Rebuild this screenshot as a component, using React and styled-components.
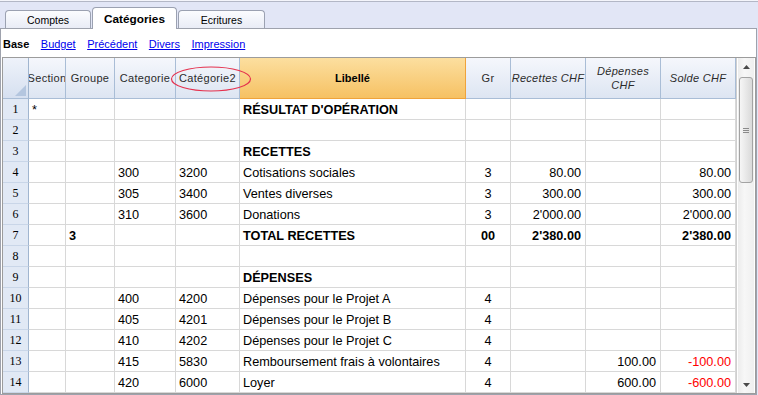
import React from 'react';
import styled, { createGlobalStyle } from 'styled-components';

const GlobalStyle = createGlobalStyle`
  html, body {
    margin: 0;
    padding: 0;
    background: #ffffff;
  }
  body {
    font-family: "Liberation Sans", Arial, sans-serif;
  }
`;

const COLS = '26px 37px 49px 61px 64px 226px 45px 75px 75px 75px';

const Window = styled.div`
    width: 758px;
    height: 395px;
    box-sizing: border-box;
    border-top: 1px solid #f4f5fb;
    background: #e2e6f6;
    display: flex;
    flex-direction: column;
    overflow: hidden;
`;

const TabStrip = styled.div`
    height: 27px;
    flex: none;
    box-sizing: border-box;
    border-top: 1px solid #b3b7c6;
    display: flex;
    align-items: flex-end;
    gap: 1px;
    padding-left: 5px;
    position: relative;
    z-index: 2;
`;

const Tab = styled.div`
    box-sizing: border-box;
    width: ${p => p.$w}px;
    height: ${p => (p.$active ? 22 : 18)}px;
    margin-bottom: ${p => (p.$active ? -1 : 0)}px;
    border: 1px solid #9ba1b1;
    border-bottom: none;
    border-radius: 4px 4px 0 0;
    background: ${p => (p.$active ? '#ffffff' : 'linear-gradient(#fbfcfe, #e9ecf6)')};
    display: flex;
    align-items: center;
    justify-content: center;
    font-size: ${p => (p.$active ? '11.8px' : '10.5px')};
    font-weight: ${p => (p.$active ? 'bold' : 'normal')};
    color: #000;
    padding-top: ${p => (p.$active ? 0 : 1)}px;
`;

const Panel = styled.div`
    flex: 1;
    width: 757px;
    box-sizing: border-box;
    background: #ffffff;
    border: 1px solid #9ea2ad;
    padding-left: 1px;
    display: flex;
    flex-direction: column;
`;

const SubNav = styled.div`
    height: 28px;
    flex: none;
    box-sizing: border-box;
    padding: 2px 0 0 1px;
    display: flex;
    align-items: center;
    gap: 11.5px;
    font-size: 11px;
`;

const Current = styled.span`
    font-weight: bold;
    color: #000;
`;

const NavLink = styled.a`
    color: #0000ee;
    text-decoration: underline;
    cursor: pointer;
`;

const Frame = styled.div`
    flex: 1;
    box-sizing: border-box;
    border: 1px solid #9c9c9c;
    display: flex;
    position: relative;
`;

const Grid = styled.div`
    display: grid;
    grid-template-columns: ${COLS};
    grid-template-rows: 41px;
    grid-auto-rows: 21px;
    align-content: start;
    width: 733px;
    flex: none;
`;

const HeadCell = styled.div`
    box-sizing: border-box;
    border-right: 1px solid ${p => (p.$hot ? '#efa33b' : '#a9bdd6')};
    border-bottom: 1px solid ${p => (p.$hot ? '#efa33b' : '#a9bdd6')};
    background: ${p => (p.$hot
        ? 'linear-gradient(#fcdf9f, #f6c163)'
        : 'linear-gradient(#f5f7fc, #dde5f2)')};
    display: flex;
    align-items: center;
    justify-content: center;
    overflow: hidden;
    white-space: ${p => (p.$wrap ? 'normal' : 'nowrap')};
    text-align: center;
    font-size: 11px;
    line-height: 14px;
    letter-spacing: ${p => (p.$hot ? 0 : 0.3)}px;
    font-style: ${p => (p.$italic ? 'italic' : 'normal')};
    font-weight: ${p => (p.$hot ? 'bold' : 'normal')};
    color: ${p => (p.$hot ? '#000' : '#2b2b2b')};
    padding: 0 2px;
`;

const Corner = styled.div`
    box-sizing: border-box;
    border-right: 1px solid #a0b5cf;
    border-bottom: 1px solid #a9bdd6;
    background: linear-gradient(#eef2fa, #d6e0f0);
    position: relative;
    &::after {
        content: '';
        position: absolute;
        right: 2px;
        bottom: 2px;
        border-style: solid;
        border-width: 0 0 11px 11px;
        border-color: transparent transparent #b4c6df transparent;
    }
`;

const RowNum = styled.div`
    box-sizing: border-box;
    border-right: 1px solid #a0b5cf;
    border-bottom: 1px solid #c9d6e8;
    background: #e1e9f5;
    display: flex;
    align-items: center;
    justify-content: center;
    font-family: "Liberation Serif", "Times New Roman", serif;
    font-size: 12px;
    color: #000;
`;

const Cell = styled.div`
    box-sizing: border-box;
    border-right: 1px solid #d8d8d8;
    border-bottom: 1px solid #d8d8d8;
    display: flex;
    align-items: center;
    justify-content: ${p => ({ left: 'flex-start', right: 'flex-end', center: 'center' }[p.$align || 'left'])};
    padding: 0 ${p => (p.$align === 'right' ? 4 : 3)}px;
    white-space: nowrap;
    overflow: hidden;
    font-size: 12.7px;
    font-weight: ${p => (p.$bold ? 'bold' : 'normal')};
    color: ${p => (p.$neg ? '#ff0000' : '#000')};
    padding-top: 1px;
`;

const ScrollZone = styled.div`
    flex: 1;
    box-sizing: border-box;
    border-left: 1px solid #cfcfcf;
    padding: 0 1px 0 1px;
    display: flex;
`;

const ScrollBar = styled.div`
    flex: 1;
    background: linear-gradient(90deg, #ececec, #f7f7f7 40%, #efefef);
    display: flex;
    flex-direction: column;
    align-items: center;
`;

const ArrowBtn = styled.div`
    height: 17px;
    width: 100%;
    flex: none;
    display: flex;
    align-items: center;
    justify-content: center;
`;

const Track = styled.div`
    flex: 1;
    width: 100%;
    padding-top: 2px;
    box-sizing: border-box;
`;

const Thumb = styled.div`
    box-sizing: border-box;
    height: 106px;
    margin: 0 1px;
    border: 1px solid #a3a3a3;
    border-radius: 3px;
    background: linear-gradient(90deg, #f6f6f6, #e8e8e8 50%, #d9d9d9);
    display: flex;
    align-items: center;
    justify-content: center;
`;

const Grip = styled.div`
    width: 6px;
    height: 5px;
    background: repeating-linear-gradient(#8a8a8a 0 1px, transparent 1px 2px);
`;

const Mark = styled.svg`
    position: absolute;
    left: 166px;
    top: 7px;
    pointer-events: none;
`;

const rows = [
    ['1', '*', '', '', '', "RÉSULTAT D'OPÉRATION", '', '', '', '', true],
    ['2', '', '', '', '', '', '', '', '', ''],
    ['3', '', '', '', '', 'RECETTES', '', '', '', '', true],
    ['4', '', '', '300', '3200', 'Cotisations sociales', '3', '80.00', '', '80.00'],
    ['5', '', '', '305', '3400', 'Ventes diverses', '3', '300.00', '', '300.00'],
    ['6', '', '', '310', '3600', 'Donations', '3', "2'000.00", '', "2'000.00"],
    ['7', '', '3', '', '', 'TOTAL RECETTES', '00', "2'380.00", '', "2'380.00", true],
    ['8', '', '', '', '', '', '', '', '', ''],
    ['9', '', '', '', '', 'DÉPENSES', '', '', '', '', true],
    ['10', '', '', '400', '4200', 'Dépenses pour le Projet A', '4', '', '', ''],
    ['11', '', '', '405', '4201', 'Dépenses pour le Projet B', '4', '', '', ''],
    ['12', '', '', '410', '4202', 'Dépenses pour le Projet C', '4', '', '', ''],
    ['13', '', '', '415', '5830', 'Remboursement frais à volontaires', '4', '', '100.00', '-100.00'],
    ['14', '', '', '420', '6000', 'Loyer', '4', '', '600.00', '-600.00'],
];

function App() {
    return (
        <Window>
            <GlobalStyle />
            <TabStrip>
                <Tab $w={86}>Comptes</Tab>
                <Tab $w={85} $active>Catégories</Tab>
                <Tab $w={87}>Ecritures</Tab>
            </TabStrip>
            <Panel>
                <SubNav>
                    <Current>Base</Current>
                    <NavLink>Budget</NavLink>
                    <NavLink>Précédent</NavLink>
                    <NavLink>Divers</NavLink>
                    <NavLink>Impression</NavLink>
                </SubNav>
                <Frame>
                    <Grid>
                        <Corner />
                        <HeadCell>Section</HeadCell>
                        <HeadCell>Groupe</HeadCell>
                        <HeadCell>Categorie</HeadCell>
                        <HeadCell>Catégorie2</HeadCell>
                        <HeadCell $hot>Libellé</HeadCell>
                        <HeadCell>Gr</HeadCell>
                        <HeadCell $italic>Recettes CHF</HeadCell>
                        <HeadCell $italic $wrap>Dépenses CHF</HeadCell>
                        <HeadCell $italic>Solde CHF</HeadCell>
                        {rows.map(r => {
                            const bold = !!r[10];
                            return (
                                <React.Fragment key={r[0]}>
                                    <RowNum>{r[0]}</RowNum>
                                    <Cell>{r[1]}</Cell>
                                    <Cell $bold={bold}>{r[2]}</Cell>
                                    <Cell>{r[3]}</Cell>
                                    <Cell>{r[4]}</Cell>
                                    <Cell $bold={bold}>{r[5]}</Cell>
                                    <Cell $align="center" $bold={bold}>{r[6]}</Cell>
                                    <Cell $align="right" $bold={bold}>{r[7]}</Cell>
                                    <Cell $align="right" $bold={bold}>{r[8]}</Cell>
                                    <Cell $align="right" $bold={bold} $neg={r[9].startsWith('-')}>{r[9]}</Cell>
                                </React.Fragment>
                            );
                        })}
                    </Grid>
                    <ScrollZone>
                        <ScrollBar>
                            <ArrowBtn>
                                <svg width="7" height="4" viewBox="0 0 7 4"><path d="M0 4 L3.5 0 L7 4 Z" fill="#4a4a4a" /></svg>
                            </ArrowBtn>
                            <Track>
                                <Thumb><Grip /></Thumb>
                            </Track>
                            <ArrowBtn>
                                <svg width="7" height="4" viewBox="0 0 7 4"><path d="M0 0 L7 0 L3.5 4 Z" fill="#4a4a4a" /></svg>
                            </ArrowBtn>
                        </ScrollBar>
                    </ScrollZone>
                    <Mark width="84" height="28" viewBox="0 0 84 28">
                        <ellipse cx="42" cy="14" rx="39.5" ry="12" fill="none" stroke="#e5304d" strokeWidth="1.2" />
                    </Mark>
                </Frame>
            </Panel>
        </Window>
    );
}

export default App;
